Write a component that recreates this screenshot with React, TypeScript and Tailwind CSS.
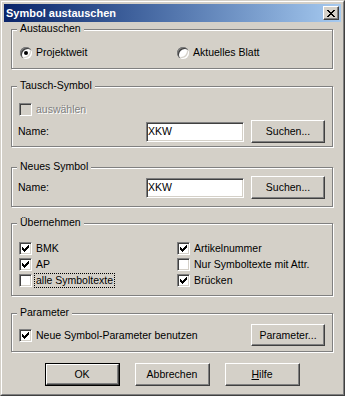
import type { ReactNode } from "react";

function Radio({ checked }: { checked?: boolean }) {
  return (
    <span className="w-[12px] h-[12px] shrink-0 rounded-full bg-white flex items-center justify-center shadow-[inset_1px_1px_0_#808080,inset_2px_2px_0_#404040,inset_-1px_-1px_0_#ffffff,inset_-2px_-2px_0_#d4d0c8]">
      {checked && <span className="w-[4px] h-[4px] rounded-full bg-black" />}
    </span>
  );
}

function CheckMark() {
  return (
    <svg width="7" height="7" viewBox="0 0 7 7" shapeRendering="crispEdges">
      <rect x="6" y="0" width="1" height="1" />
      <rect x="5" y="1" width="2" height="1" />
      <rect x="0" y="2" width="1" height="1" />
      <rect x="4" y="2" width="3" height="1" />
      <rect x="0" y="3" width="2" height="1" />
      <rect x="3" y="3" width="3" height="1" />
      <rect x="0" y="4" width="5" height="1" />
      <rect x="1" y="5" width="3" height="1" />
      <rect x="2" y="6" width="1" height="1" />
    </svg>
  );
}

function Check({ checked, disabled }: { checked?: boolean; disabled?: boolean }) {
  return (
    <span
      className={`w-[13px] h-[13px] shrink-0 flex items-center justify-center border border-t-[#808080] border-l-[#808080] border-b-white border-r-white shadow-[inset_1px_1px_0_#404040,inset_-1px_-1px_0_#d4d0c8] ${disabled ? "bg-[#d4d0c8]" : "bg-white"}`}
    >
      {checked && <CheckMark />}
    </span>
  );
}

function Btn({ children, w, h, isDefault }: { children: ReactNode; w: string; h: string; isDefault?: boolean }) {
  return (
    <button className={`${w} ${h} shrink-0 p-0 ${isDefault ? "border border-black" : ""}`}>
      <span className="flex items-center justify-center w-full h-full bg-[#d4d0c8] border border-t-white border-l-white border-b-[#404040] border-r-[#404040] shadow-[inset_-1px_-1px_0_#808080]">
        {children}
      </span>
    </button>
  );
}

function Group({ title, className, children }: { title: string; className: string; children: ReactNode }) {
  return (
    <div className={`relative border border-[#808080] shadow-[inset_1px_1px_0_#ffffff,1px_1px_0_#ffffff] pl-[6px] ${className}`}>
      <span className="absolute -top-[8px] left-[5px] px-[3px] leading-[13px] bg-[#d4d0c8]">{title}</span>
      {children}
    </div>
  );
}

function Field() {
  return (
    <div className="w-[98px] h-[20px] shrink-0 bg-white flex items-center pl-[1px] border border-t-[#808080] border-l-[#808080] border-b-white border-r-white shadow-[inset_1px_1px_0_#404040,inset_-1px_-1px_0_#d4d0c8]">
      XKW
    </div>
  );
}

export default function App() {
  return (
    <div className="w-[345px] h-[396px] bg-[#d4d0c8] text-black text-[10.5px] leading-[13px] font-['Liberation_Sans',Arial,sans-serif] border border-t-[#d4d0c8] border-l-[#d4d0c8] border-b-[#404040] border-r-[#404040]">
      <div className="h-full p-[2px] flex flex-col border border-t-white border-l-white border-b-[#808080] border-r-[#808080]">
        {/* title bar */}
        <div className="h-[18px] shrink-0 flex items-center justify-between pl-[2px] pr-[2px] bg-linear-to-r from-[#0a246a] to-[#a6caf0]">
          <span className="text-white font-bold text-[11px]">Symbol austauschen</span>
          <button className="w-[16px] h-[14px] p-0 flex">
            <span className="flex items-center justify-center w-full h-full bg-[#d4d0c8] border border-t-white border-l-white border-b-[#404040] border-r-[#404040] shadow-[inset_-1px_-1px_0_#808080]">
              <svg width="8" height="7" viewBox="0 0 8 7" shapeRendering="crispEdges">
                <rect x="0" y="0" width="2" height="1" />
                <rect x="6" y="0" width="2" height="1" />
                <rect x="1" y="1" width="2" height="1" />
                <rect x="5" y="1" width="2" height="1" />
                <rect x="2" y="2" width="4" height="1" />
                <rect x="3" y="3" width="2" height="1" />
                <rect x="2" y="4" width="4" height="1" />
                <rect x="1" y="5" width="2" height="1" />
                <rect x="5" y="5" width="2" height="1" />
                <rect x="0" y="6" width="2" height="1" />
                <rect x="6" y="6" width="2" height="1" />
              </svg>
            </span>
          </button>
        </div>

        <div className="flex flex-col pl-[7px] pr-[8px] pt-[7px]">
          <Group title="Austauschen" className="h-[40px] pt-[15px]">
            <div className="grid grid-cols-[159px_1fr] h-[15px] items-center">
              <label className="flex items-center gap-[4px] ml-[2px]">
                <Radio checked />
                Projektweit
              </label>
              <label className="flex items-center gap-[4px]">
                <Radio />
                Aktuelles Blatt
              </label>
            </div>
          </Group>

          <Group title="Tausch-Symbol" className="mt-[17px] h-[61px] pt-[14px]">
            <label className="flex items-center gap-[4px] h-[17px] ml-[1px] text-[#808080] [text-shadow:1px_1px_0_#ffffff]">
              <Check disabled />
              auswählen
            </label>
            <div className="flex items-center h-[23px] mt-[2px]">
              <span className="w-[128px] shrink-0">Name:</span>
              <Field />
              <span className="ml-[7px]">
                <Btn w="w-[74px]" h="h-[23px]">Suchen...</Btn>
              </span>
            </div>
          </Group>

          <Group title="Neues Symbol" className="mt-[20px] h-[40px] pt-[8px]">
            <div className="flex items-center h-[23px]">
              <span className="w-[128px] shrink-0">Name:</span>
              <Field />
              <span className="ml-[7px]">
                <Btn w="w-[74px]" h="h-[23px]">Suchen...</Btn>
              </span>
            </div>
          </Group>

          <Group title="Übernehmen" className="mt-[16px] h-[73px] pt-[16px]">
            <div className="grid grid-cols-[159px_1fr] auto-rows-[16px] items-center">
              <label className="flex items-center gap-[4px] ml-[1px]">
                <Check checked />
                BMK
              </label>
              <label className="flex items-center gap-[4px]">
                <Check checked />
                Artikelnummer
              </label>
              <label className="flex items-center gap-[4px] ml-[1px]">
                <Check checked />
                AP
              </label>
              <label className="flex items-center gap-[4px]">
                <Check />
                Nur Symboltexte mit Attr.
              </label>
              <label className="flex items-center gap-[4px] ml-[1px]">
                <Check />
                <span className="-ml-[2px] px-[1px] border border-dotted border-black">alle Symboltexte</span>
              </label>
              <label className="flex items-center gap-[4px]">
                <Check checked />
                Brücken
              </label>
            </div>
          </Group>

          <Group title="Parameter" className="mt-[17px] h-[39px] pt-[10px]">
            <div className="flex items-center justify-between h-[22px] pr-[7px]">
              <label className="flex items-center gap-[4px] ml-[1px]">
                <Check checked />
                Neue Symbol-Parameter benutzen
              </label>
              <Btn w="w-[74px]" h="h-[22px]">Parameter...</Btn>
            </div>
          </Group>

          <div className="mt-[11px] flex justify-center gap-[15px]">
            <Btn w="w-[75px]" h="h-[23px]" isDefault>OK</Btn>
            <Btn w="w-[75px]" h="h-[23px]">Abbrechen</Btn>
            <Btn w="w-[75px]" h="h-[23px]">
              <span>
                <span className="underline">H</span>ilfe
              </span>
            </Btn>
          </div>
        </div>
      </div>
    </div>
  );
}
